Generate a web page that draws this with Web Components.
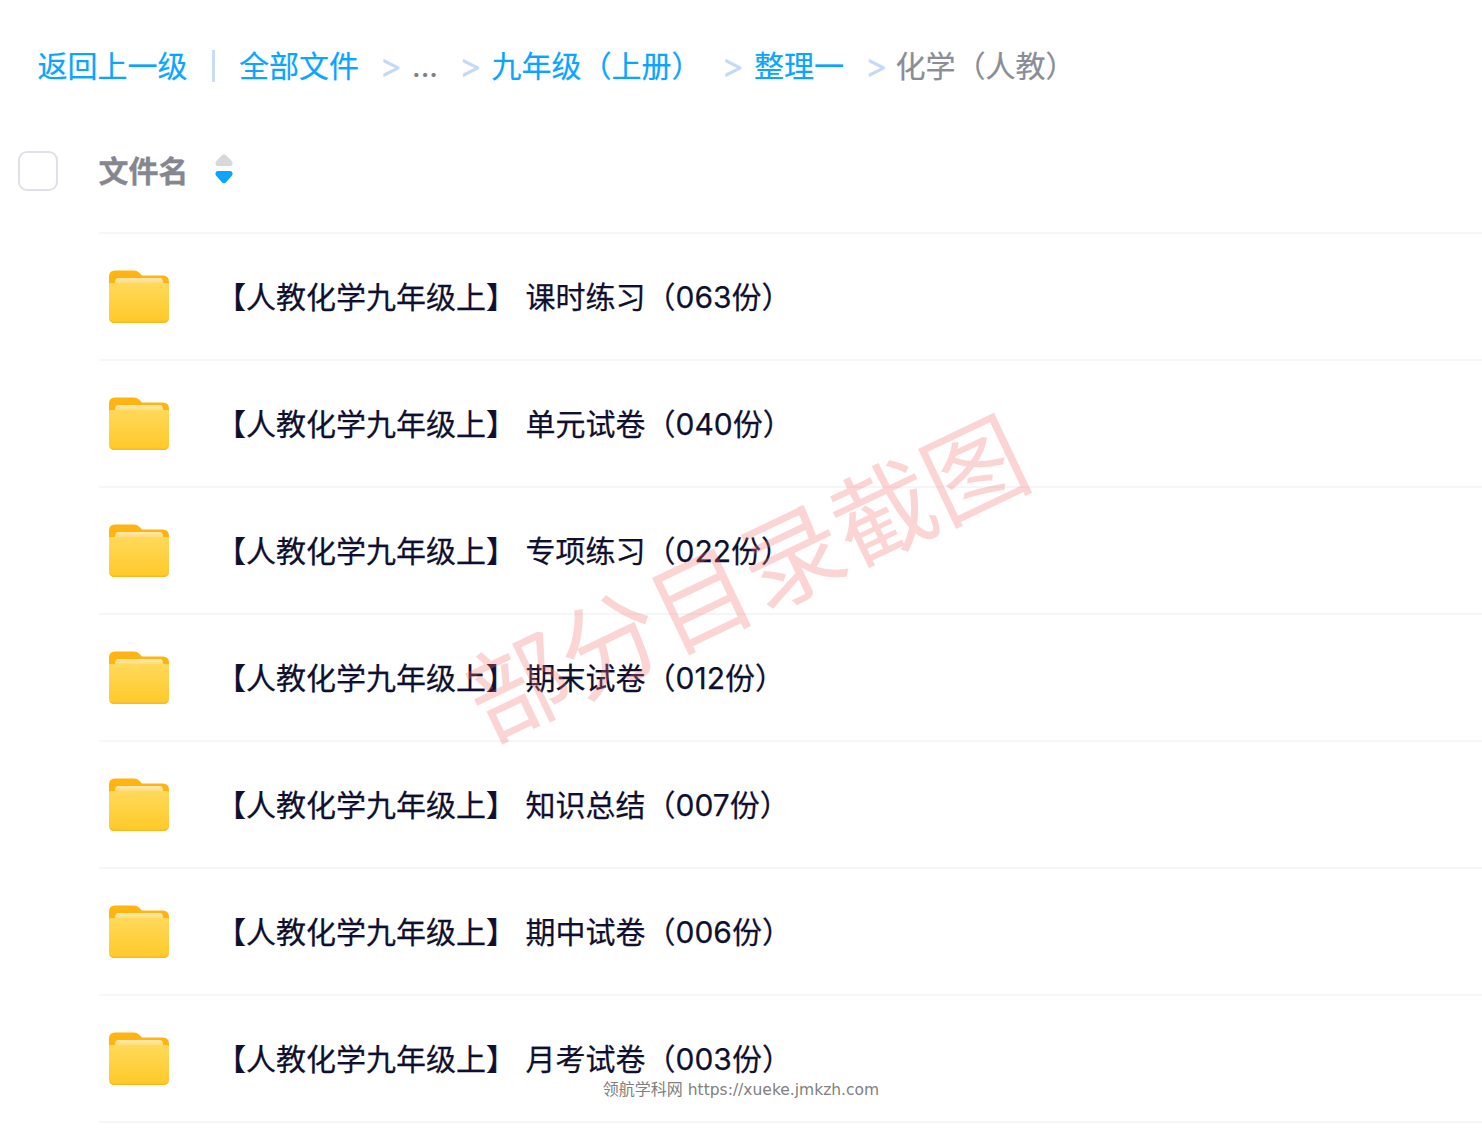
<!DOCTYPE html>
<html lang="zh-CN">
<head>
<meta charset="utf-8">
<title>化学（人教）</title>
<style>
  html, body { margin: 0; height: 100%; background: #fff; overflow: hidden; }
  body { font-family: Inter, "Noto Sans CJK SC", sans-serif; }
</style>
</head>
<body>
<file-page>
  <bread-crumbs></bread-crumbs>
  <list-header></list-header>
  <folder-row>课时练习（063份）</folder-row>
  <folder-row>单元试卷（040份）</folder-row>
  <folder-row>专项练习（022份）</folder-row>
  <folder-row>期末试卷（012份）</folder-row>
  <folder-row>知识总结（007份）</folder-row>
  <folder-row>期中试卷（006份）</folder-row>
  <folder-row>月考试卷（003份）</folder-row>
  <water-mark></water-mark>
</file-page>

<script>
const pageTemplate = document.createElement('template');
pageTemplate.innerHTML = `
<style>
  :host {
    display: block;
    position: relative;
    height: 1130px;
    overflow: hidden;
    background: #fff;
    font-family: Inter, "Noto Sans CJK SC", sans-serif;
  }
</style>
<slot></slot>
`;

class FilePage extends HTMLElement {
  connectedCallback() {
    const root = this.attachShadow({ mode: 'open' });
    root.appendChild(pageTemplate.content.cloneNode(true));
  }
}

const crumbsTemplate = document.createElement('template');
crumbsTemplate.innerHTML = `
<style>
  :host {
    display: flex;
    align-items: center;
    height: 132px;
    padding-left: 37.5px;
    font-size: 30px;
    line-height: 40px;
    color: #0aa5ff;
    white-space: nowrap;
    -webkit-text-stroke: 0.2px currentColor;
  }
  .bar { width: 3px; height: 32px; background: #c9dcf5; margin: 0 24px 0 24.5px; }
  .sep { color: #c5d9f6; margin: 0 10px 0 20.5px; font-size: 34px; }
  .dots { color: #7d7f88; font-size: 30px; }
  .sep.next { margin-left: 21px; }
  .sep.wide { margin-left: 20px; }
  .sep.last { margin-left: 21px; margin-right: 8px; }
  .now { color: #8a8d96; }
</style>
<span>返回上一级</span>
<span class="bar"></span>
<span>全部文件</span>
<span class="sep">&gt;</span>
<span class="dots">...</span>
<span class="sep next">&gt;</span>
<span>九年级（上册）</span>
<span class="sep wide">&gt;</span>
<span>整理一</span>
<span class="sep last">&gt;</span>
<span class="now">化学（人教）</span>
`;

class BreadCrumbs extends HTMLElement {
  connectedCallback() {
    const root = this.attachShadow({ mode: 'open' });
    root.appendChild(crumbsTemplate.content.cloneNode(true));
  }
}

const headerTemplate = document.createElement('template');
headerTemplate.innerHTML = `
<style>
  :host {
    display: flex;
    align-items: center;
    height: 78px;
    padding-left: 18px;
    padding-bottom: 22px;
    font-size: 30px;
    font-weight: 700;
    color: #85868f;
    white-space: nowrap;
    -webkit-text-stroke: 0.3px currentColor;
  }
  .check {
    box-sizing: border-box;
    width: 40px;
    height: 40px;
    border: 2px solid #dfe1ea;
    border-radius: 9px;
    margin-right: 40.5px;
  }
  .title { padding-bottom: 4px; }
  svg { margin: 0 0 4px 26.5px; display: block; }
</style>
<span class="check"></span>
<span class="title">文件名</span>
<svg width="18" height="32" viewBox="0 0 20 32" preserveAspectRatio="none">
  <path d="M8 2 Q10 .5 12 2 L18.5 8 Q19.5 9 19.5 10.5 Q19.5 13 17 13 H3 Q.5 13 .5 10.5 Q.5 9 1.5 8Z" fill="#d7d8de"/>
  <path d="M3 18 H17 Q19.5 18 19.5 20.5 Q19.5 22 18.5 23 L12 29.5 Q10 31 8 29.5 L1.5 23 Q.5 22 .5 20.5 Q.5 18 3 18Z" fill="#0aa5ff"/>
</svg>
`;

class ListHeader extends HTMLElement {
  connectedCallback() {
    const root = this.attachShadow({ mode: 'open' });
    root.appendChild(headerTemplate.content.cloneNode(true));
  }
}

const rowTemplate = document.createElement('template');
rowTemplate.innerHTML = `
<style>
  :host {
    display: flex;
    align-items: center;
    box-sizing: border-box;
    height: 127px;
    margin-left: 99px;
    padding-left: 10px;
    border-top: 2px solid #f6f6f8;
    font-size: 30px;
    color: #0f1030;
    white-space: nowrap;
    -webkit-text-stroke: 0.25px currentColor;
  }
  :host(:last-of-type) { height: 129px; border-bottom: 2px solid #f6f6f8; }
  svg { display: block; flex: none; margin-right: 47px; }
  .name { padding-bottom: 4px; }
  .grade { margin-right: 9.5px; }
</style>
<svg width="60" height="54" viewBox="0 0 60 54">
  <defs>
    <linearGradient id="body" x1="0" y1="0" x2="0" y2="1">
      <stop offset="0" stop-color="#ffd95a"/>
      <stop offset="1" stop-color="#ffc928"/>
    </linearGradient>
    <linearGradient id="sheet" x1="0" y1="0" x2="0" y2="1">
      <stop offset="0" stop-color="#ffeab0"/>
      <stop offset="1" stop-color="#ffdc7a"/>
    </linearGradient>
  </defs>
  <path d="M6 .5 H25 Q28 .5 30 2.5 L33 5.5 H54 Q60 5.5 60 12 V20 H0 V6.5 Q0 .5 6 .5Z" fill="#ffb411"/>
  <path d="M9 8 H51 Q54 8 54 13 H6 Q6 8 9 8Z" fill="url(#sheet)"/>
  <path d="M0 14 Q0 13 2 13 H58 Q60 13 60 14 V47 Q60 53 54 53 H6 Q0 53 0 47Z" fill="url(#body)"/>
  <path d="M0 47 Q0 53 6 53 H54 Q60 53 60 47 V46.5 Q60 51.5 54 51.5 H6 Q0 51.5 0 46.5Z" fill="#ffb81c"/>
</svg>
<span class="name"><span class="grade">【人教化学九年级上】</span><slot></slot></span>
`;

class FolderRow extends HTMLElement {
  connectedCallback() {
    const root = this.attachShadow({ mode: 'open' });
    root.appendChild(rowTemplate.content.cloneNode(true));
  }
}

const markTemplate = document.createElement('template');
markTemplate.innerHTML = `
<style>
  :host { display: contents; }
  .stamp {
    position: absolute;
    left: 743.5px;
    top: 573px;
    transform: translate(-50%, -50%) rotate(-25.5deg);
    font-size: 101px;
    line-height: 1;
    color: rgba(242, 112, 112, 0.3);
    white-space: nowrap;
    font-family: "Noto Sans CJK SC", sans-serif;
    pointer-events: none;
  }
  .site {
    position: absolute;
    left: 0;
    right: 0;
    top: 1078px;
    text-align: center;
    font-family: "DejaVu Sans", "Noto Sans CJK SC", sans-serif;
    font-size: 15.5px;
    line-height: 20px;
    color: #808080;
  }
  .site span { font-family: "Noto Sans CJK SC", sans-serif; font-size: 16px; }
</style>
<div class="stamp">部分目录截图</div>
<div class="site"><span>领航学科网</span> https://xueke.jmkzh.com</div>
`;

class WaterMark extends HTMLElement {
  connectedCallback() {
    const root = this.attachShadow({ mode: 'open' });
    root.appendChild(markTemplate.content.cloneNode(true));
  }
}

customElements.define('file-page', FilePage);
customElements.define('bread-crumbs', BreadCrumbs);
customElements.define('list-header', ListHeader);
customElements.define('folder-row', FolderRow);
customElements.define('water-mark', WaterMark);
</script>
</body>
</html>
